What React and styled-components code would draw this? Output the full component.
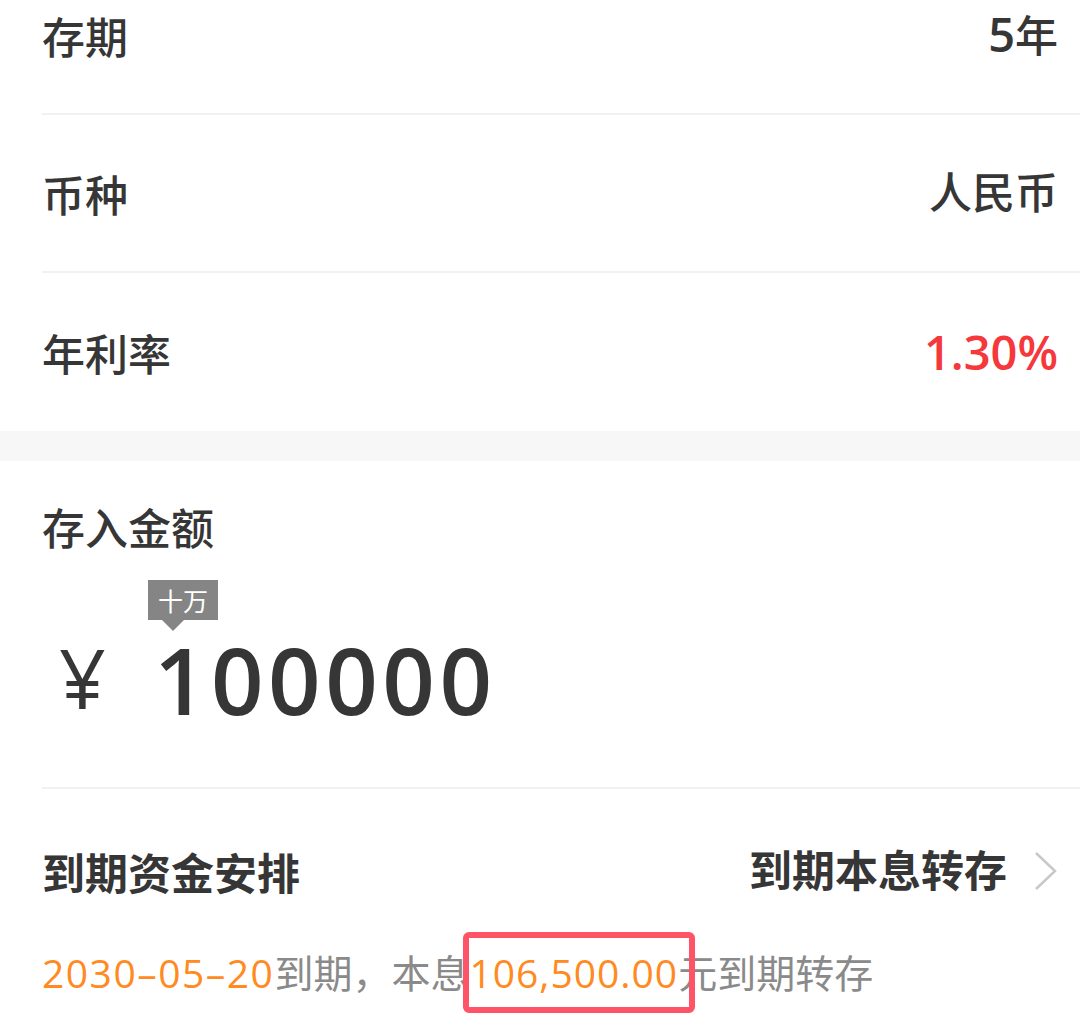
import styled, { createGlobalStyle } from "styled-components";

const GlobalStyle = createGlobalStyle`
  body {
    margin: 0;
    background: #fff;
    font-family: "Open Sans", "Noto Sans CJK SC", sans-serif;
    color: #363636;
  }
`;

const Page = styled.div`
  width: 1080px;
  height: 1021px;
  overflow: hidden;
  background: #fff;
`;

// 列表被向上滚动了一部分
const InfoList = styled.div`
  margin-top: -43px;
`;

const Row = styled.div`
  height: 158px;
  box-sizing: border-box;
  margin-left: 42px;
  padding-right: 22px;
  display: flex;
  align-items: center;
  justify-content: space-between;
  border-bottom: ${(p) => (p.$last ? "none" : "2px solid #f1f1f1")};
`;

const Label = styled.div`
  font-family: "Noto Sans CJK SC", sans-serif;
  font-size: 43px;
  font-weight: ${(p) => (p.$bold ? 700 : 500)};
  line-height: 58px;
  color: #363636;
`;

const Value = styled.div`
  display: flex;
  align-items: baseline;
  font-size: 43px;
  font-weight: ${(p) => (p.$bold ? 700 : 500)};
  line-height: 58px;
  color: ${(p) => p.$color || "#363636"};
`;

const Num = styled.span`
  font-family: "Open Sans", sans-serif;
  font-size: 47px;
  font-weight: 600;
`;

const Band = styled.div`
  height: 30px;
  background: #f7f7f7;
`;

const AmountCard = styled.div`
  padding-left: 42px;
`;

const AmountInner = styled.div`
  display: flex;
  flex-direction: column;
  padding-top: 36px;
  padding-bottom: 54px;
  border-bottom: 2px solid #f1f1f1;
`;

const Tip = styled.div`
  position: relative;
  align-self: flex-start;
  margin-left: 106px;
  margin-top: 25px;
  height: 40px;
  padding: 0 10px;
  background: #858585;
  color: #fff;
  font-family: "Noto Sans CJK SC", sans-serif;
  font-size: 25px;
  line-height: 40px;

  &::after {
    content: "";
    position: absolute;
    left: 14px;
    top: 100%;
    border-left: 11px solid transparent;
    border-right: 11px solid transparent;
    border-top: 11px solid #858585;
  }
`;

const AmountRow = styled.div`
  display: flex;
  align-items: center;
  margin-top: 7px;
  color: #363636;
`;

const Yen = styled.span`
  font-family: "Open Sans", sans-serif;
  font-size: 82px;
  font-weight: 400;
  line-height: 100px;
  margin-left: 17px;
  margin-bottom: 6px;
`;

const Digits = styled.span`
  font-family: "Open Sans", sans-serif;
  font-size: 92px;
  font-weight: 600;
  letter-spacing: 4.5px;
  line-height: 100px;
  margin-left: 48px;
`;

const Settle = styled.div`
  padding: 53px 22px 0 42px;
`;

const SettleRow = styled.div`
  display: flex;
  align-items: center;
  justify-content: space-between;
`;

const Action = styled.div`
  display: flex;
  align-items: center;
  gap: 27px;
`;

const Note = styled.div`
  margin-top: 50px;
  font-family: "Open Sans", "Noto Sans CJK SC", sans-serif;
  font-size: 39px;
  line-height: 46px;
  color: #8a8a8a;
  white-space: nowrap;
`;

const Orange = styled.span`
  color: #ff8a1f;
  letter-spacing: ${(p) => p.$spacing || "0px"};
`;

const Mark = styled.span`
  position: relative;
  border: 6px solid #ff5468;
  border-radius: 6px;
  padding: 8px 11px 8px 0;
  margin: 0 -17px 0 -6px;
`;

function Chevron() {
  return (
    <svg width="24" height="40" viewBox="0 0 24 40" fill="none">
      <polyline
        points="2,2 21,20 2,38"
        stroke="#c8c8c8"
        strokeWidth="2.5"
        strokeLinejoin="miter"
      />
    </svg>
  );
}

export default function App() {
  return (
    <Page>
      <GlobalStyle />
      <InfoList>
        <Row>
          <Label>存期</Label>
          <Value>
            <Num>5</Num>年
          </Value>
        </Row>
        <Row>
          <Label>币种</Label>
          <Value>人民币</Value>
        </Row>
        <Row $last>
          <Label>年利率</Label>
          <Value $color="#f5383b">
            <Num>1.30%</Num>
          </Value>
        </Row>
      </InfoList>
      <Band />
      <AmountCard>
        <AmountInner>
          <Label>存入金额</Label>
          <Tip>十万</Tip>
          <AmountRow>
            <Yen>¥</Yen>
            <Digits>100000</Digits>
          </AmountRow>
        </AmountInner>
      </AmountCard>
      <Settle>
        <SettleRow>
          <Label $bold>到期资金安排</Label>
          <Action>
            <Value $bold>到期本息转存</Value>
            <Chevron />
          </Action>
        </SettleRow>
        <Note>
          <Orange $spacing="1.5px">2030–05–20</Orange>到期，本息
          <Mark>
            <Orange $spacing="1px">106,500.00</Orange>
          </Mark>
          元到期转存
        </Note>
      </Settle>
    </Page>
  );
}
